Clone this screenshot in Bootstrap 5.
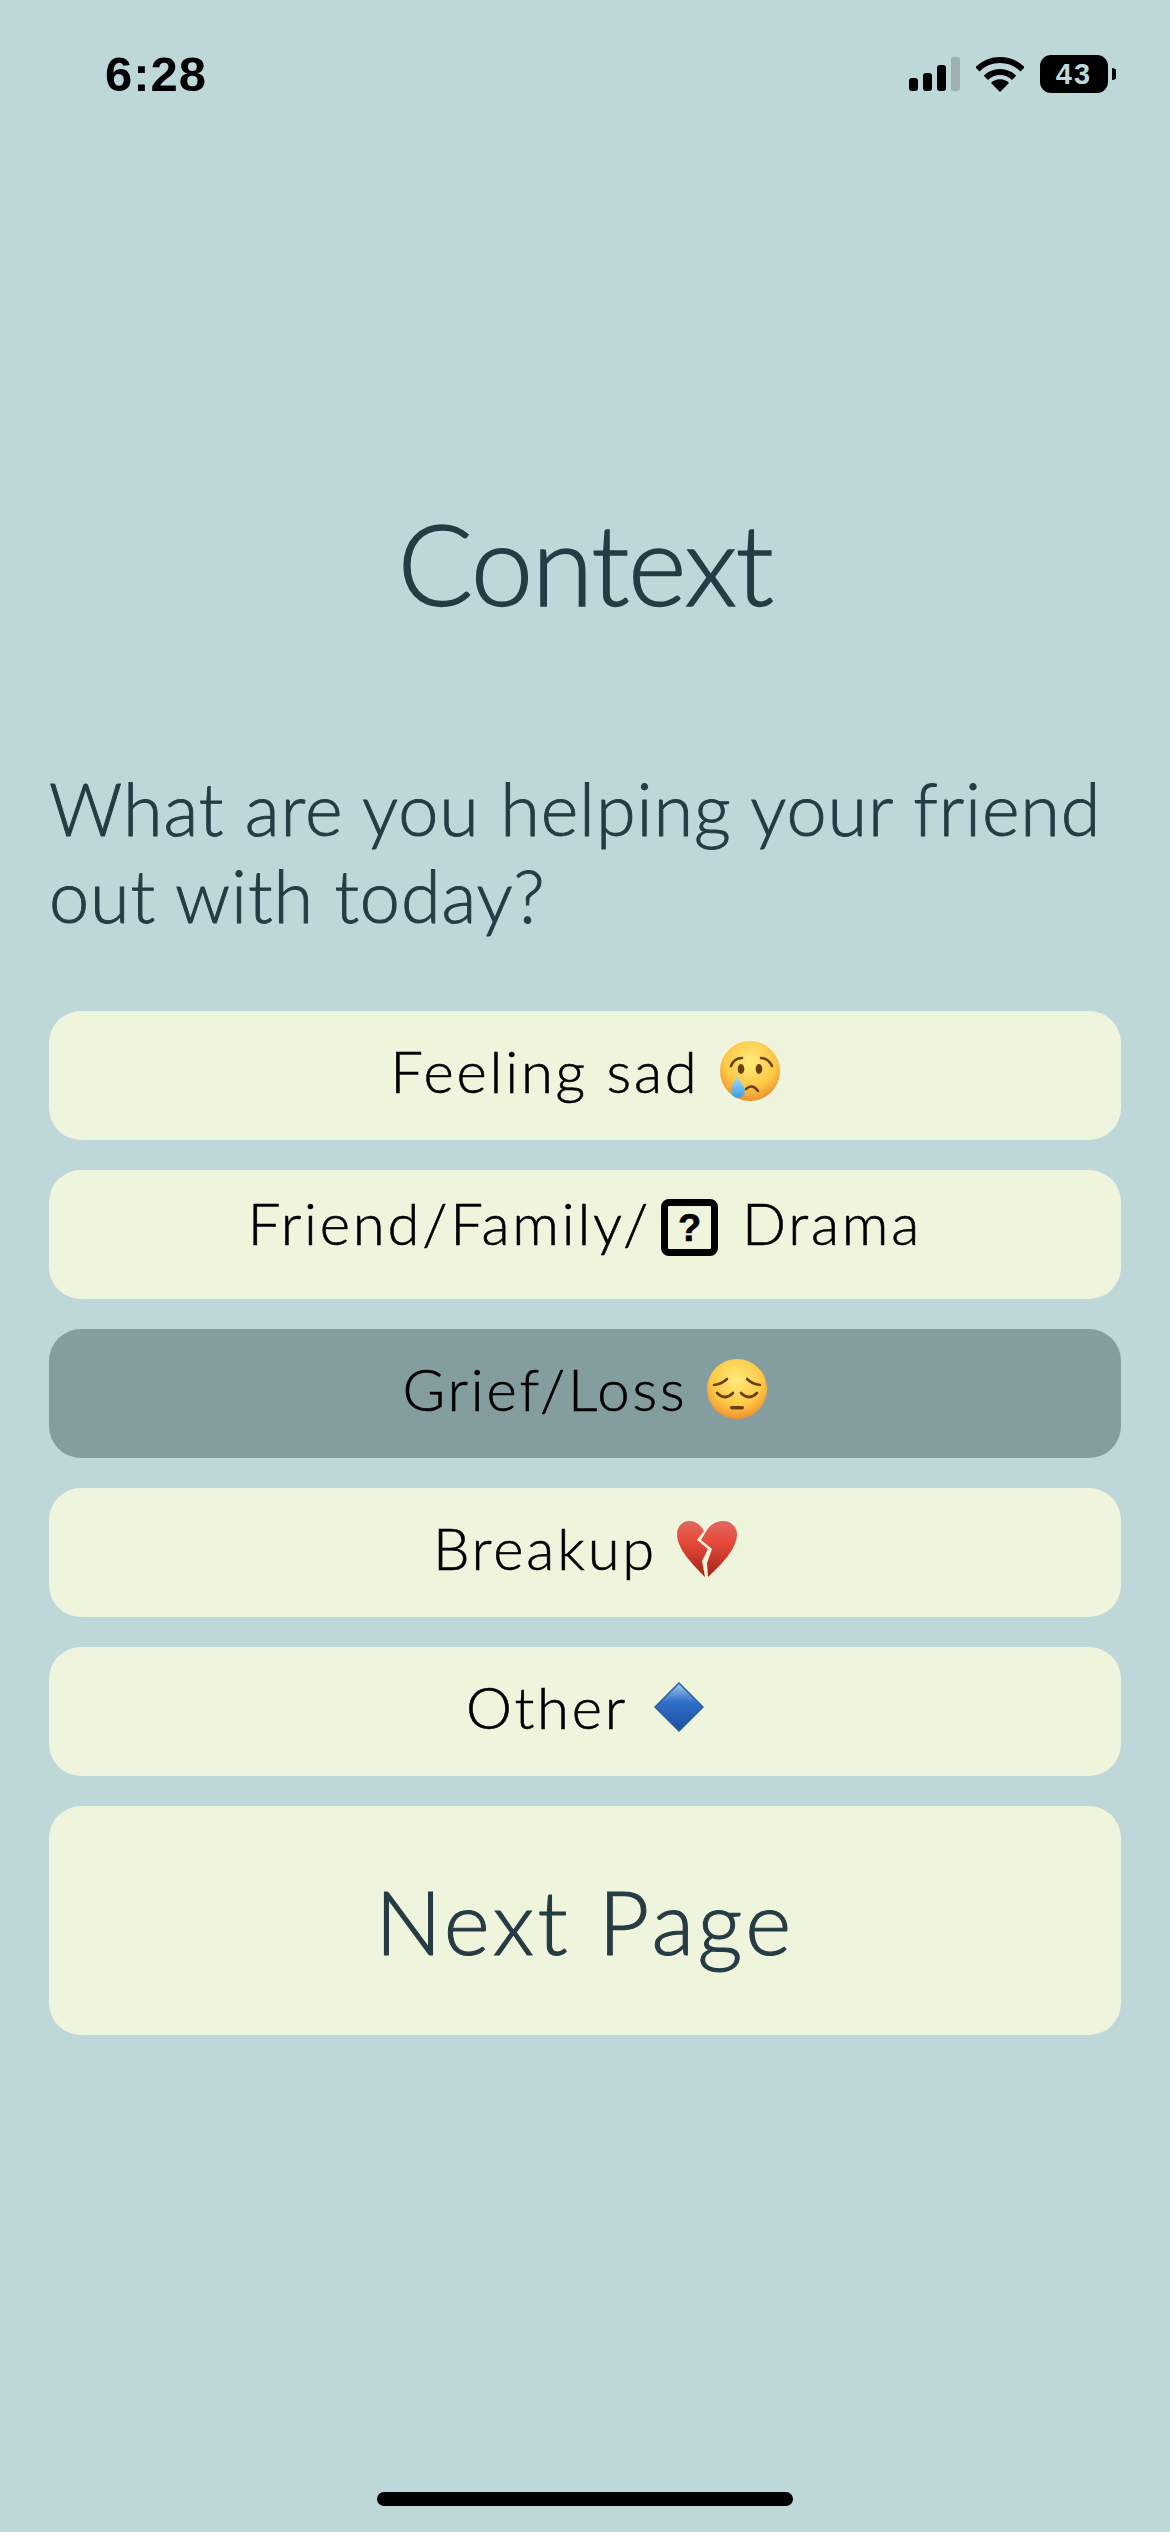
<!DOCTYPE html>
<html lang="en">
<head>
    <meta charset="UTF-8">
    <meta name="viewport" content="width=device-width, initial-scale=1.0">
    <title>Context</title>
    <link href="https://cdn.jsdelivr.net/npm/bootstrap@5.3.0/dist/css/bootstrap.min.css" rel="stylesheet">
    <style>
        body { background-color: #bed7d8; font-family: "Lato", "Liberation Sans", sans-serif; }
        .screen { min-height: 2532px; padding: 55px 49px 26px; }
        .status-row { height: 38px; padding: 0 5px 0 56px; }
        .clock { font-family: "Liberation Sans", sans-serif; font-weight: 700; font-size: 49px; line-height: 38px; letter-spacing: 1px; color: #000; }
        .battery-box { width: 68px; height: 38px; border-radius: 11px; background: #000; color: #bed7d8; font: 700 29px/38px "Liberation Sans", sans-serif; letter-spacing: 2px; text-align: center; }
        .page-title { margin: 405px 0 0; font-weight: 300; font-size: 112px; line-height: 130px; color: #263c44; text-align: center; letter-spacing: -1.4px; -webkit-text-stroke: 1.4px #263c44; }
        .question { margin: 137px 0 0; font-weight: 300; font-size: 72px; line-height: 87px; color: #263c44; letter-spacing: .9px; -webkit-text-stroke: .9px #263c44; }
        .choices { margin-top: 72px; gap: 30px; }
        .choice-btn { height: 129px; padding: 25px 0 0; border: 0; border-radius: 32px; background: #eff4dc; color: #000; font-weight: 300; font-size: 58px; line-height: 70px; gap: 20px; letter-spacing: 2.8px; -webkit-text-stroke: .6px #000; }
        .choice-btn:hover { background: #eff4dc; color: #000; }
        .choice-btn.picked, .choice-btn.picked:hover { background: #849d9e; }
        .choice-btn.raised { padding-top: 18px; }
        .face-icon { margin-top: 5px; }
        .heart-icon { margin-top: 8px; }
        .gem-icon { margin-top: 10px; margin-left: 6px; }
        .next-btn { height: 229px; padding: 0; border: 0; border-radius: 32px; background: #eff4dc; color: #263c44; font-weight: 300; font-size: 88px; letter-spacing: 3.5px; -webkit-text-stroke: 1.1px #263c44; }
        .next-btn:hover { background: #eff4dc; color: #263c44; }
        .mystery-box { width: 57px; height: 57px; margin: 11px 4px 0 -10px; border: 7px solid #000; border-radius: 8px; font: 700 38px/42px "Liberation Sans", sans-serif; letter-spacing: 0; color: #000; }
        .home-bar { width: 416px; height: 14px; border-radius: 7px; background: #000; }
    </style>
</head>
<body>
    <div class="screen d-flex flex-column">
        <div class="status-row d-flex justify-content-between align-items-center">
            <div class="clock">6:28</div>
            <div class="d-flex align-items-center gap-3">
                <svg width="51" height="34" viewBox="0 0 51 34"><rect x="0" y="21" width="9" height="13" rx="3"/><rect x="14" y="16" width="9" height="18" rx="3"/><rect x="28" y="8" width="9" height="26" rx="3"/><rect x="42" y="0" width="9" height="34" rx="3" fill="#9bb0af"/></svg>
                <svg width="48" height="36" viewBox="0 0 48 36"><path d="M1.4 13.4A32 32 0 0 1 46.6 13.4" fill="none" stroke="#000" stroke-width="6"/><path d="M9.9 21.9A20 20 0 0 1 38.1 21.9" fill="none" stroke="#000" stroke-width="6"/><path d="M24 36L15 27A12.7 12.7 0 0 1 33 27Z"/></svg>
                <div class="d-flex align-items-center">
                    <div class="battery-box">43</div>
                    <svg class="ms-1" width="4" height="12" viewBox="0 0 4 12"><path d="M0 0A6 6 0 0 1 0 12Z"/></svg>
                </div>
            </div>
        </div>

        <h1 class="page-title">Context</h1>
        <p class="question mb-0">What are you helping your friend out with today?</p>

        <div class="choices d-flex flex-column">
            <button class="btn choice-btn d-flex justify-content-center align-items-start" type="button">
                <span>Feeling sad</span>
                <svg class="face-icon" width="60" height="60" viewBox="0 0 60 60" aria-label="crying face">
                    <defs>
                        <radialGradient id="faceFill" cx="50%" cy="35%" r="65%"><stop offset="0" stop-color="#ffec7d"/><stop offset=".65" stop-color="#fdc845"/><stop offset="1" stop-color="#ec9230"/></radialGradient>
                        <linearGradient id="tearFill" x1="0" y1="0" x2="0" y2="1"><stop offset="0" stop-color="#a9dcf7"/><stop offset="1" stop-color="#3f9be2"/></linearGradient>
                    </defs>
                    <circle cx="30" cy="30" r="30" fill="url(#faceFill)"/>
                    <ellipse cx="21" cy="28" rx="3.3" ry="5" fill="#6b3f10"/><ellipse cx="39" cy="28" rx="3.3" ry="5" fill="#6b3f10"/>
                    <path d="M11 25Q14 17 22 17M41 17Q48 17 52 25M26 48Q32 42 38 50" fill="none" stroke="#6b3f10" stroke-width="2.6" stroke-linecap="round"/>
                    <path d="M17 35C14 42 11 45 11 50A7 7 0 0 0 25 50C25 45 20 42 17 35Z" fill="url(#tearFill)"/>
                </svg>
            </button>
            <button class="btn choice-btn raised d-flex justify-content-center align-items-start" type="button">
                <span>Friend/Family/</span>
                <span class="mystery-box d-flex align-items-center justify-content-center">?</span>
                <span>Drama</span>
            </button>
            <button class="btn choice-btn picked d-flex justify-content-center align-items-start" type="button">
                <span>Grief/Loss</span>
                <svg class="face-icon" width="60" height="60" viewBox="0 0 60 60" aria-label="pensive face">
                    <circle cx="30" cy="30" r="30" fill="url(#faceFill)"/>
                    <path d="M7 26Q15 25 20 20M40 20Q45 25 53 26M10 34Q18 42 26 34M34 34Q42 42 50 34" fill="none" stroke="#6b3f10" stroke-width="2.6" stroke-linecap="round"/>
                    <rect x="23" y="47" width="14" height="3.4" rx="1.7" fill="#6b3f10"/>
                </svg>
            </button>
            <button class="btn choice-btn d-flex justify-content-center align-items-start" type="button">
                <span>Breakup</span>
                <svg class="heart-icon" width="60" height="56" viewBox="0 0 60 56" aria-label="broken heart">
                    <defs><linearGradient id="heartFill" x1="0" y1="0" x2="0" y2="1"><stop offset="0" stop-color="#e0675f"/><stop offset=".35" stop-color="#e84c3d"/><stop offset="1" stop-color="#a62316"/></linearGradient></defs>
                    <path d="M27 10C23 3 18 0 13 0C5 0 0 6 0 13C0 28 16 44 28 56L25 40L31 28L20 19Z" fill="url(#heartFill)"/>
                    <path d="M30 9C34 3 40 0 46 0C54 0 60 6 60 13C60 28 44 44 31 56L30 42L35 28L24 19Z" fill="url(#heartFill)"/>
                </svg>
            </button>
            <button class="btn choice-btn d-flex justify-content-center align-items-start" type="button">
                <span>Other</span>
                <svg class="gem-icon" width="50" height="50" viewBox="0 0 50 50" aria-label="blue diamond">
                    <defs><linearGradient id="gemFill" x1="0" y1="0" x2="0" y2="1"><stop offset="0" stop-color="#a6c8ec"/><stop offset=".4" stop-color="#2f6fc8"/><stop offset="1" stop-color="#1d4f9e"/></linearGradient></defs>
                    <path d="M25 1L49 25L25 49L1 25Z" fill="url(#gemFill)" stroke="#2a5f9f" stroke-width="1.5"/>
                </svg>
            </button>
            <button class="btn next-btn d-flex justify-content-center align-items-center" type="button">Next Page</button>
        </div>

        <div class="home-bar mx-auto mt-auto"></div>
    </div>
    <script src="https://cdn.jsdelivr.net/npm/bootstrap@5.3.0/dist/js/bootstrap.bundle.min.js"></script>
</body>
</html>
